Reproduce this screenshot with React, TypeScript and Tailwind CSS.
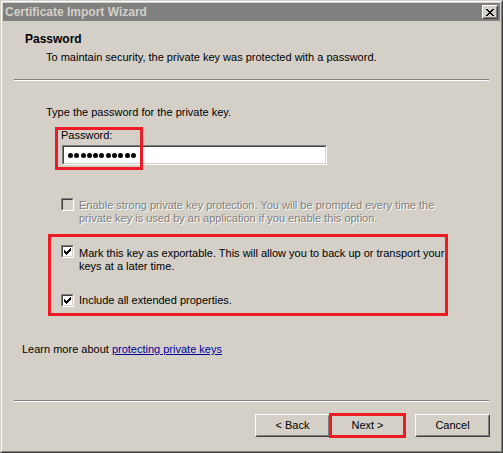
import React from "react";

const font = { fontFamily: '"Liberation Sans", Arial, sans-serif' };

function Check({ checked, disabled }: { checked?: boolean; disabled?: boolean }) {
  return (
    <div className="w-[13px] h-[13px] shrink-0 border border-t-[#808080] border-l-[#808080] border-b-white border-r-white">
      <div
        className={`w-[11px] h-[11px] border border-t-[#404040] border-l-[#404040] border-b-[#d4d0c8] border-r-[#d4d0c8] flex items-center justify-center ${
          disabled ? "bg-[#d4d0c8]" : "bg-white"
        }`}
      >
        {checked && (
          <svg width="7" height="7" viewBox="0 0 7 7" shapeRendering="crispEdges">
            <path d="M0 2h1v3h-1zM1 3h1v3h-1zM2 4h1v3h-1zM3 3h1v3h-1zM4 2h1v3h-1zM5 1h1v3h-1zM6 0h1v3h-1z" fill="#000" />
          </svg>
        )}
      </div>
    </div>
  );
}

function Btn({ label }: { label: string }) {
  return (
    <div className="w-[75px] h-[23px] border border-t-white border-l-white border-b-[#404040] border-r-[#404040]">
      <div className="w-full h-full border border-t-[#d4d0c8] border-l-[#d4d0c8] border-b-[#808080] border-r-[#808080] flex items-center justify-center text-[11px] text-black">
        {label}
      </div>
    </div>
  );
}

export default function App() {
  return (
    <div className="w-[503px] h-[453px] bg-[#d4d0c8]" style={font}>
      <div className="w-full h-full border border-t-[#d4d0c8] border-l-[#d4d0c8] border-b-[#404040] border-r-[#404040]">
        <div className="w-full h-full border border-t-white border-l-white border-b-[#808080] border-r-[#808080] p-px flex flex-col">
          {/* Title bar */}
          <div className="h-[18px] bg-[#808080] flex items-center justify-between pl-[2px] pr-[2px]">
            <span className="text-[12px] font-bold text-[#d4d0c8] leading-none">Certificate Import Wizard</span>
            <div className="w-[16px] h-[14px] border border-t-white border-l-white border-b-[#404040] border-r-[#404040] bg-[#d4d0c8]">
              <div className="w-full h-full border border-t-[#d4d0c8] border-l-[#d4d0c8] border-b-[#808080] border-r-[#808080] flex items-center justify-center">
                <svg width="8" height="7" viewBox="0 0 8 7" shapeRendering="crispEdges">
                  <path d="M0 0h2v1h-2zM6 0h2v1h-2zM1 1h2v1h-2zM5 1h2v1h-2zM2 2h4v1h-4zM3 3h2v1h-2zM2 4h4v1h-4zM1 5h2v1h-2zM5 5h2v1h-2zM0 6h2v1h-2zM6 6h2v1h-2z" fill="#000" />
                </svg>
              </div>
            </div>
          </div>

          {/* Header */}
          <div className="h-[58px] pt-[12px]">
            <div className="ml-[22px] text-[12px] font-bold leading-[13px] text-black">Password</div>
            <div className="ml-[43px] mt-[5px] text-[11px] leading-[13px] text-black">
              To maintain security, the private key was protected with a password.
            </div>
          </div>
          <div className="ml-[11px] w-[475px] border-t border-t-[#808080] border-b border-b-white" />

          {/* Body */}
          <div className="relative flex-1 text-[11px] leading-[13px] text-black">
            <div className="ml-[43px] mt-[25px]">Type the password for the private key.</div>
            <div className="ml-[58px] mt-[10px]">Password:</div>
            <div className="ml-[59px] mt-[3px] w-[265px] h-[20px] border border-t-[#808080] border-l-[#808080] border-b-white border-r-white">
              <div className="w-full h-full border border-t-[#404040] border-l-[#404040] border-b-[#d4d0c8] border-r-[#d4d0c8] bg-white flex items-center pl-[4px] gap-[1.3px]">
                {Array.from({ length: 11 }).map((_, i) => (
                  <span key={i} className="w-[5px] h-[5px] rounded-full bg-black" />
                ))}
              </div>
            </div>

            <div className="ml-[58px] mt-[33px] flex gap-[5px]">
              <Check disabled />
              <div className="text-[#808080] mt-[1px]" style={{ textShadow: "1px 1px 0 #fff" }}>
                Enable strong private key protection. You will be prompted every time the
                <br />
                private key is used by an application if you enable this option.
              </div>
            </div>

            <div className="ml-[58px] mt-[20px] flex gap-[5px]">
              <Check checked />
              <div className="mt-[2px]">
                Mark this key as exportable. This will allow you to back up or transport your
                <br />
                keys at a later time.
              </div>
            </div>

            <div className="ml-[58px] mt-[21px] flex gap-[5px]">
              <Check checked />
              <div>Include all extended properties.</div>
            </div>

            <div className="ml-[19px] mt-[36px]">
              Learn more about <span className="text-[#000099] underline">protecting private keys</span>
            </div>

            {/* annotation boxes */}
            <div className="absolute left-[52px] top-[46px] w-[88px] h-[43px] border-[3px] border-[#ed1c24]" />
            <div className="absolute left-[45px] top-[153px] w-[400px] h-[82px] border-[3px] border-[#ed1c24]" />
          </div>

          <div className="ml-[11px] w-[475px] border-t border-t-[#808080] border-b border-b-white" />
          <div className="h-[48px] flex items-start pt-[12px] pl-[252px]">
            <Btn label="< Back" />
            <div className="relative">
              <Btn label="Next >" />
              <div className="absolute -left-[1px] -top-[1px] w-[77px] h-[25px] border-[3px] border-[#ed1c24]" />
            </div>
            <div className="ml-[10px]">
              <Btn label="Cancel" />
            </div>
          </div>
        </div>
      </div>
    </div>
  );
}
